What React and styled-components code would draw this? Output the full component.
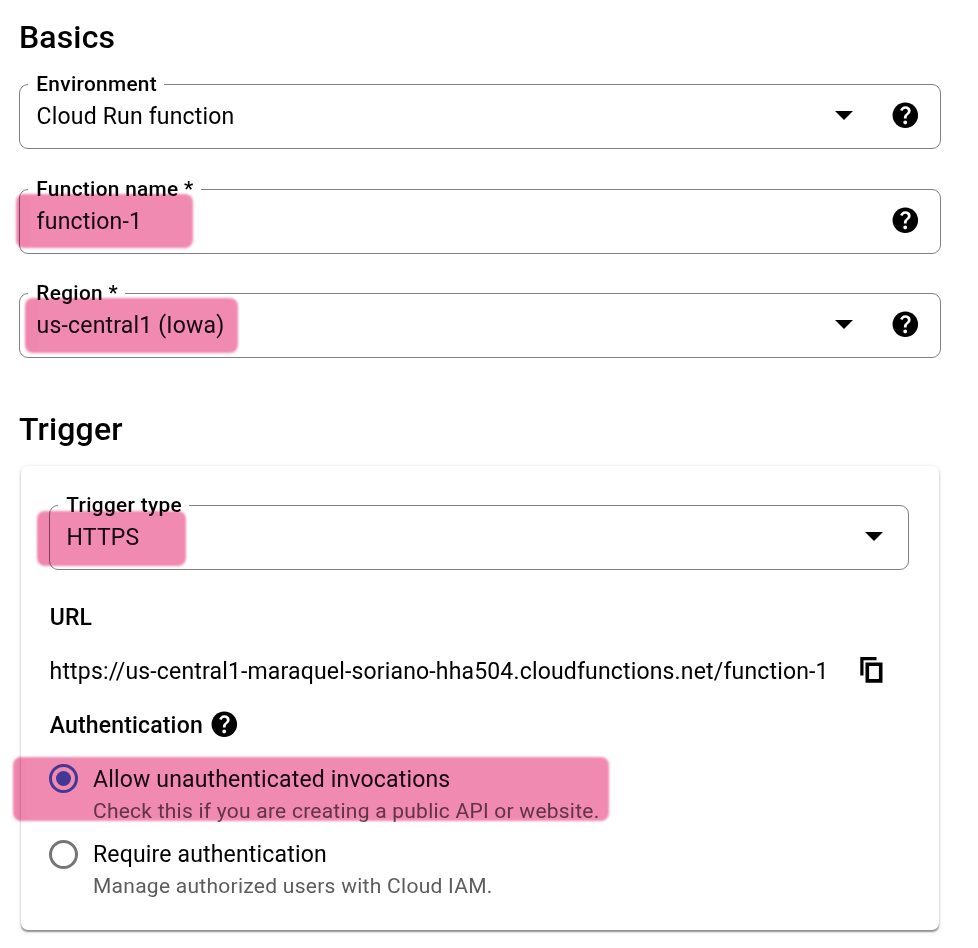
import React from 'react';
import styled, { createGlobalStyle } from 'styled-components';

const GlobalStyle = createGlobalStyle`
  * { box-sizing: border-box; }
  body {
    margin: 0;
    background: #fff;
    color: #000;
    font-family: Roboto, "Liberation Sans", sans-serif;
  }
`;

const Page = styled.main`
  width: 978px;
  height: 948px;
  padding: 17px 37px 0 19px;
  overflow: hidden;
`;

const SectionTitle = styled.h2`
  margin: 0;
  font-size: 32px;
  font-weight: 500;
  line-height: 40px;
  letter-spacing: 0.15px;
`;

const FieldStack = styled.div`
  display: flex;
  flex-direction: column;
  gap: 39.5px;
  margin: 27px 0 51px;
`;

const FieldBox = styled.div`
  position: relative;
  display: flex;
  align-items: center;
  height: 65px;
  padding: 0 19px 2px 16.6px;
  border: 1px solid #808080;
  border-radius: 9px;
`;

const FieldLabel = styled.label`
  position: absolute;
  top: -14px;
  left: 8px;
  padding: 0 7.5px 0 8.3px;
  background: #fff;
  font-size: 20.8px;
  font-weight: 500;
  line-height: 26px;
  letter-spacing: 0.32px;
  white-space: nowrap;
`;

const FieldValue = styled.span`
  flex: 1;
  font-size: 23px;
  line-height: 30px;
  letter-spacing: 0.18px;
  padding-top: 3px;
`;

const Caret = styled.svg`
  width: 18px;
  height: 9px;
  margin-right: ${(p) => (p.$last ? '6px' : '37px')};
`;

const HelpSvg = styled.svg`
  width: 30.6px;
  height: 30.6px;
  flex: none;
`;

const Highlight = styled.span`
  position: absolute;
  left: ${(p) => p.$x}px;
  top: ${(p) => p.$y}px;
  width: ${(p) => p.$w}px;
  height: ${(p) => p.$h}px;
  border-radius: 8px;
  background: #f08ab1;
  mix-blend-mode: multiply;
  filter: blur(1.3px);
  pointer-events: none;
  z-index: 1;

  &::after {
    content: "";
    position: absolute;
    inset: 0 auto 0 0;
    width: 14px;
    border-radius: 8px;
    background: rgba(225, 90, 145, 0.08);
  }
`;

const InkTint = styled(Highlight)`
  background: rgba(240, 60, 140, 0.08);
  mix-blend-mode: lighten;

  &::after { display: none; }
`;

const Card = styled.section`
  width: 918px;
  margin: 17px 0 0 2px;
  padding: 39px 30px 29px 28px;
  border-radius: 7px;
  box-shadow: 0 2px 1.5px -0.5px rgba(0, 0, 0, 0.38), 0 1px 5px rgba(0, 0, 0, 0.14);
`;

const SubHeading = styled.h3`
  display: flex;
  align-items: center;
  gap: 6px;
  height: 30px;
  margin: ${(p) => p.$top}px 0 24px 0.7px;
  font-size: 23px;
  font-weight: 500;
  line-height: 30px;
  letter-spacing: 0.17px;

  span { padding-top: 2px; }
  svg { margin-top: -1px; }
`;

const UrlRow = styled.div`
  display: flex;
  align-items: center;
  height: 30px;
  margin-left: 0.6px;
  gap: 31px;
  font-size: 23px;
  line-height: 30px;
  letter-spacing: 0.165px;
  white-space: nowrap;

  span { padding-top: 2px; }
`;

const CopyIcon = styled.svg`
  width: 23px;
  height: 26px;
  margin-top: -2px;
  flex: none;
`;

const Options = styled.div`
  position: relative;
  display: flex;
  flex-direction: column;
  gap: 14px;
`;

const Option = styled.label`
  display: grid;
  grid-template-columns: 29px 1fr;
  column-gap: 15px;
  align-items: start;
`;

const Radio = styled.span`
  display: grid;
  place-items: center;
  width: 29px;
  height: 29px;
  border: 3px solid ${(p) => (p.$on ? '#3a66d8' : '#757575')};
  border-radius: 50%;

  &::after {
    content: "";
    width: 15px;
    height: 15px;
    border-radius: 50%;
    background: ${(p) => (p.$on ? '#3a66d8' : 'transparent')};
  }
`;

const OptionTitle = styled.div`
  padding-top: 1px;
  font-size: 23px;
  line-height: 30px;
  letter-spacing: 0.17px;

  ${Option} + ${Option} & { padding-top: 0; }
`;

const OptionHint = styled.div`
  padding-top: 1px;
  color: #5c5c5c;
  font-size: 21px;
  line-height: 30px;
  letter-spacing: 0.24px;

  ${Option} + ${Option} & { letter-spacing: 0.27px; }
`;

function HelpIcon() {
  return (
    <HelpSvg viewBox="0 -960 960 960">
      <circle cx="480" cy="-480" r="400" />
      <path
        fill="#fff"
        transform="translate(480 -480) scale(1.18) translate(-480 480)"
        d="M478-240q21 0 35.5-14.5T528-290t-14.5-35.5T478-340t-35.5 14.5T428-290t14.5 35.5T478-240Zm-36-154h74q0-33 7.5-52t42.5-52q26-26 41-49.5t15-56.5q0-56-41-86t-97-30q-57 0-92.5 30T342-618l66 26q5-18 22.5-39t53.5-21q32 0 48 17.5t16 38.5q0 20-12 37.5T506-526q-44 39-54 59t-10 73Z"
      />
    </HelpSvg>
  );
}

function Marker({ x, y, w, h }) {
  return (
    <>
      <Highlight $x={x} $y={y} $w={w} $h={h} />
      <InkTint $x={x} $y={y} $w={w} $h={h} />
    </>
  );
}

function Field({ label, value, select, help, marker }) {
  return (
    <FieldBox>
      <FieldLabel>{label}</FieldLabel>
      <FieldValue>{value}</FieldValue>
      {select && (
        <Caret $last={!help} viewBox="0 0 18 9">
          <path d="M0 0h18l-9 9z" />
        </Caret>
      )}
      {help && <HelpIcon />}
      {marker && <Marker {...marker} />}
    </FieldBox>
  );
}

export default function App() {
  return (
    <Page>
      <GlobalStyle />
      <SectionTitle>Basics</SectionTitle>
      <FieldStack>
        <Field label="Environment" value="Cloud Run function" select help />
        <Field label="Function name *" value="function-1" help marker={{ x: -4, y: 4, w: 177, h: 54 }} />
        <Field label="Region *" value="us-central1 (Iowa)" select help marker={{ x: 5, y: 4, w: 213, h: 55 }} />
      </FieldStack>

      <SectionTitle>Trigger</SectionTitle>
      <Card>
        <Field label="Trigger type" value="HTTPS" select marker={{ x: -13, y: 5, w: 149, h: 54.5 }} />

        <SubHeading $top={32}><span>URL</span></SubHeading>
        <UrlRow>
          <span>https://us-central1-maraquel-soriano-hha504.cloudfunctions.net/function-1</span>
          <CopyIcon viewBox="0 0 23 26" fill="none" stroke="#000">
            <path d="M16.5 1.6H1.9V18.5" strokeWidth="3.2" />
            <path d="M7.3 7.3h13.4v16.6H7.3z" strokeWidth="3.6" />
          </CopyIcon>
        </UrlRow>

        <SubHeading $top={24}>
          <span>Authentication</span>
          <HelpIcon />
        </SubHeading>
        <Options>
          <Option>
            <Radio $on />
            <div>
              <OptionTitle>Allow unauthenticated invocations</OptionTitle>
              <OptionHint>Check this if you are creating a public API or website.</OptionHint>
            </div>
          </Option>
          <Option>
            <Radio />
            <div>
              <OptionTitle>Require authentication</OptionTitle>
              <OptionHint>Manage authorized users with Cloud IAM.</OptionHint>
            </div>
          </Option>
          <Marker x={-36.5} y={-7} w={596} h={64} />
        </Options>
      </Card>
    </Page>
  );
}
